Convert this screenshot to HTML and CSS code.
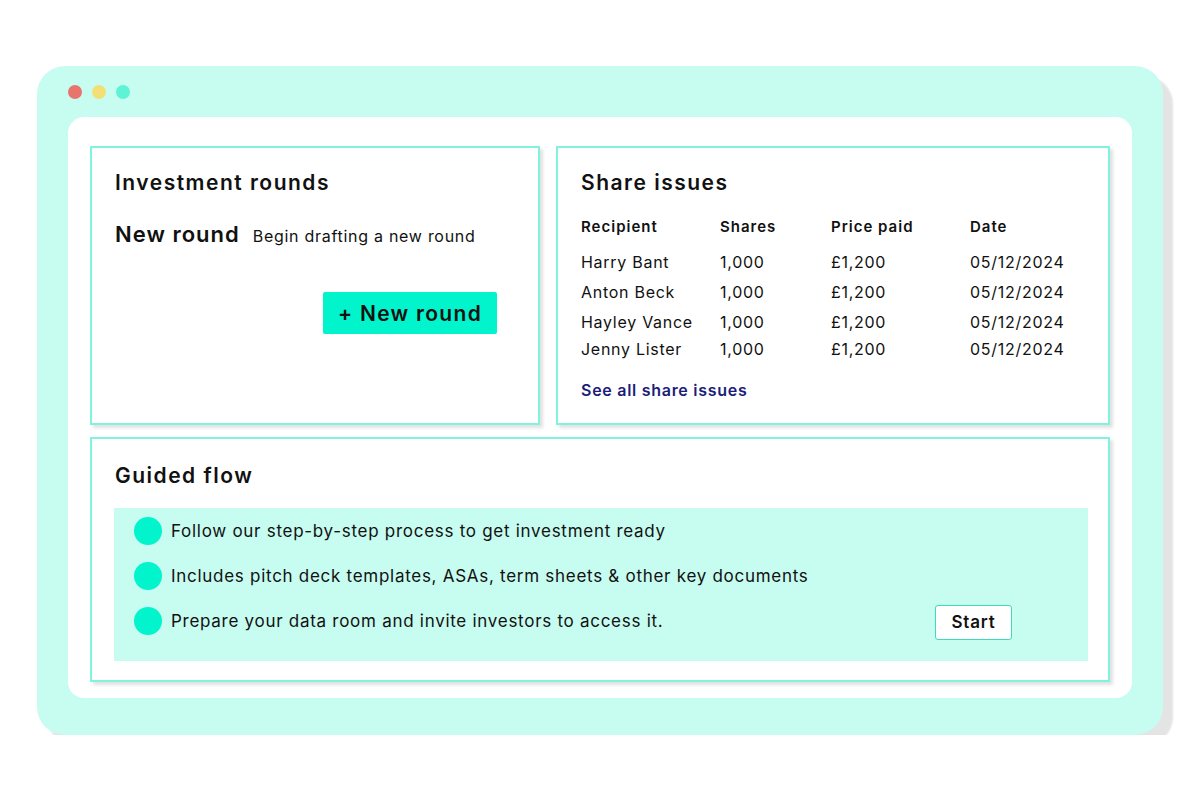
FILE: index.html
```html
<!DOCTYPE html>
<html lang="en">
<head>
    <meta charset="UTF-8">
    <meta name="viewport" content="width=device-width, initial-scale=1.0">
    <title>Investment dashboard</title>
    <link rel="stylesheet" href="styles.css">
</head>
<body>
    <!-- Окно браузера -->
    <div class="window">
        <div class="window-bar">
            <span class="dot dot-red"></span>
            <span class="dot dot-yellow"></span>
            <span class="dot dot-green"></span>
        </div>

        <div class="panel">
            <!-- Раунды -->
            <div class="card">
                <div class="card-title">Investment rounds</div>
                <div class="new-round">
                    <span class="new-round-label">New round</span>
                    <span class="new-round-text">Begin drafting a new round</span>
                </div>
                <button class="new-round-button">+ New round</button>
            </div>

            <!-- Выпуск акций -->
            <div class="card">
                <div class="card-title">Share issues</div>
                <div class="shares-table">
                    <div class="shares-row shares-head">
                        <span>Recipient</span><span>Shares</span><span>Price paid</span><span>Date</span>
                    </div>
                    <div class="shares-row">
                        <span>Harry Bant</span><span>1,000</span><span>£1,200</span><span>05/12/2024</span>
                    </div>
                    <div class="shares-row">
                        <span>Anton Beck</span><span>1,000</span><span>£1,200</span><span>05/12/2024</span>
                    </div>
                    <div class="shares-row">
                        <span>Hayley Vance</span><span>1,000</span><span>£1,200</span><span>05/12/2024</span>
                    </div>
                    <div class="shares-row">
                        <span>Jenny Lister</span><span>1,000</span><span>£1,200</span><span>05/12/2024</span>
                    </div>
                </div>
                <a class="see-all" href="#">See all share issues</a>
            </div>

            <!-- Пошаговый процесс -->
            <div class="card card-wide">
                <div class="card-title">Guided flow</div>
                <div class="flow-box">
                    <div class="flow-item">
                        <span class="bullet"></span>
                        <span>Follow our step-by-step process to get investment ready</span>
                    </div>
                    <div class="flow-item">
                        <span class="bullet"></span>
                        <span>Includes pitch deck templates, ASAs, term sheets &amp; other key documents</span>
                    </div>
                    <div class="flow-item">
                        <span class="bullet"></span>
                        <span>Prepare your data room and invite investors to access it.</span>
                        <button class="start-button">Start</button>
                    </div>
                </div>
            </div>
        </div>
    </div>
</body>
</html>
```

FILE: styles.css
```css
/* Общие стили */
body {
    margin: 0;
    padding: 0;
    background-color: #fff;
    font-family: "Inter", "Noto Sans", sans-serif;
    letter-spacing: 0.045em;
    color: #111;
}

/* Окно */
.window {
    width: 1126px;
    height: 669px;
    box-sizing: border-box;
    margin: 66px 0 0 37px;
    padding: 19px 31px 0 31px;
    background-color: #c7fcf0;
    border-radius: 28px;
    box-shadow: 10px 10px 2px #e4e4e4;
}
.window-bar {
    display: flex;
    gap: 10px;
    margin-bottom: 18px;
}
.dot {
    width: 14px;
    height: 14px;
    border-radius: 50%;
}
.dot-red { background-color: #e8746e; }
.dot-yellow { background-color: #f3df78; }
.dot-green { background-color: #5ff3d6; }

/* Белая панель */
.panel {
    height: 581px;
    box-sizing: border-box;
    padding: 29px 22px 16px 22px;
    background-color: #fff;
    border-radius: 16px;
    display: grid;
    grid-template-columns: 450px 1fr;
    grid-template-rows: 279px 245px;
    gap: 12px 16px;
}

/* Карточки */
.card {
    border: 2px solid #80f3df;
    box-shadow: 3px 3px 3px #e2e2e2;
    padding: 22px 23px;
    background-color: #fff;
}
.card-wide {
    grid-column: 1 / 3;
    padding-top: 24px;
}
.card-title {
    font-size: 21px;
    font-weight: 600;
    line-height: 26px;
    letter-spacing: 1.5px;
}

/* Новый раунд */
.new-round {
    display: flex;
    align-items: baseline;
    gap: 13px;
    margin-top: 24px;
    line-height: 28px;
}
.new-round-label {
    font-size: 22px;
    font-weight: 600;
    letter-spacing: 1px;
}
.new-round-text {
    font-size: 16px;
}
.new-round-button {
    margin: 42px 0 0 208px;
    width: 174px;
    height: 42px;
    border: none;
    border-radius: 2px;
    background-color: #02f4cd;
    font-family: inherit;
    font-size: 21px;
    font-weight: 600;
    letter-spacing: 1.3px;
    color: #111;
    cursor: pointer;
}

/* Таблица акций */
.shares-table {
    margin-top: 21px;
}
.shares-row {
    display: grid;
    grid-template-columns: 139px 111px 139px 1fr;
    font-size: 16px;
    line-height: 22px;
    margin-top: 8px;
}
.shares-row:last-child {
    margin-top: 5px;
}
.shares-head {
    font-size: 15px;
    font-weight: 600;
    line-height: 20px;
    letter-spacing: 1px;
    margin-top: 0;
    margin-bottom: 14px;
}
.see-all {
    display: block;
    margin-top: 20px;
    font-size: 16px;
    font-weight: 600;
    line-height: 20px;
    color: #1b1d78;
    text-decoration: none;
}

/* Пошаговый процесс */
.flow-box {
    margin: 19px -3px 0 -1px;
    background-color: #c7fcf0;
    padding: 9px 20px 26px 20px;
    display: flex;
    flex-direction: column;
    gap: 17px;
}
.flow-item {
    display: flex;
    align-items: center;
    gap: 9px;
    font-size: 17px;
    line-height: 28px;
    height: 28px;
}
.bullet {
    width: 28px;
    height: 28px;
    border-radius: 50%;
    background-color: #02f4cd;
    flex-shrink: 0;
}
.start-button {
    margin: 2px 56px 0 auto;
    width: 77px;
    height: 35px;
    background-color: #fff;
    border: 1px solid #3fd9bb;
    border-radius: 3px;
    font-family: inherit;
    font-size: 17px;
    font-weight: 600;
    letter-spacing: 0.8px;
    color: #111;
    cursor: pointer;
}
```
